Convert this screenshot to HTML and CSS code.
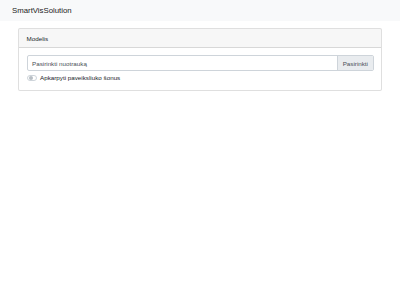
FILE: index.html
```html
<!DOCTYPE html>
<html lang="lt">
<head>
    <meta charset="UTF-8">
    <meta name="viewport" content="width=device-width, initial-scale=1.0">
    <title>SmartVisSolution</title>
    <link rel="stylesheet" href="styles.css">
</head>
<body>
    <nav class="navbar">
        <a class="navbar-brand" href="#">SmartVisSolution</a>
    </nav>

    <div class="container">
        <div class="card">
            <div class="card-header">Modelis</div>
            <div class="card-body">
                <div class="custom-file">
                    <span class="custom-file-label">Pasirinkti nuotrauką</span>
                    <span class="custom-file-button">Pasirinkti</span>
                </div>
                <label class="custom-switch">
                    <span class="switch-track"><span class="switch-knob"></span></span>
                    Apkarpyti paveiksliuko šonus
                </label>
            </div>
        </div>
    </div>
</body>
</html>
```

FILE: styles.css
```css
body {
    font-family: "Liberation Sans", Arial, sans-serif;
    font-size: 6.25px;
    line-height: 1.45;
    color: #212529;
    background: #fff;
    margin: 0;
}
.navbar {
    background: #f8f9fa;
    padding: 3px 12px;
    height: 21px;
    box-sizing: border-box;
    display: flex;
    align-items: center;
}
.navbar-brand {
    font-size: 7.8px;
    color: #222;
    text-decoration: none;
}
.container {
    margin: 7px 18px;
}
.card {
    border: 1px solid rgba(0,0,0,0.125);
    border-radius: 2px;
    background: #fff;
}
.card-header {
    background: rgba(0,0,0,0.03);
    border-bottom: 1px solid rgba(0,0,0,0.125);
    padding: 4.5px 7.5px;
}
.card-body {
    padding: 7px 7.5px 7.5px;
}
.custom-file {
    display: flex;
    height: 15.5px;
    border: 1px solid #ced4da;
    border-radius: 2px;
    box-sizing: border-box;
    color: #495057;
    overflow: hidden;
}
.custom-file-label {
    flex: 1;
    padding: 2.5px 4.5px;
}
.custom-file-button {
    background: #e9ecef;
    border-left: 1px solid #ced4da;
    padding: 2.5px 4.5px;
}
.custom-switch {
    display: flex;
    align-items: center;
    margin-top: 2.5px;
    gap: 3px;
}
.switch-track {
    width: 10.5px;
    height: 6px;
    border: 1px solid #ced4da;
    border-radius: 4px;
    box-sizing: border-box;
    display: flex;
    align-items: center;
    padding-left: 1px;
}
.switch-knob {
    width: 4px;
    height: 4px;
    border-radius: 50%;
    background: #b8bec4;
}
```
